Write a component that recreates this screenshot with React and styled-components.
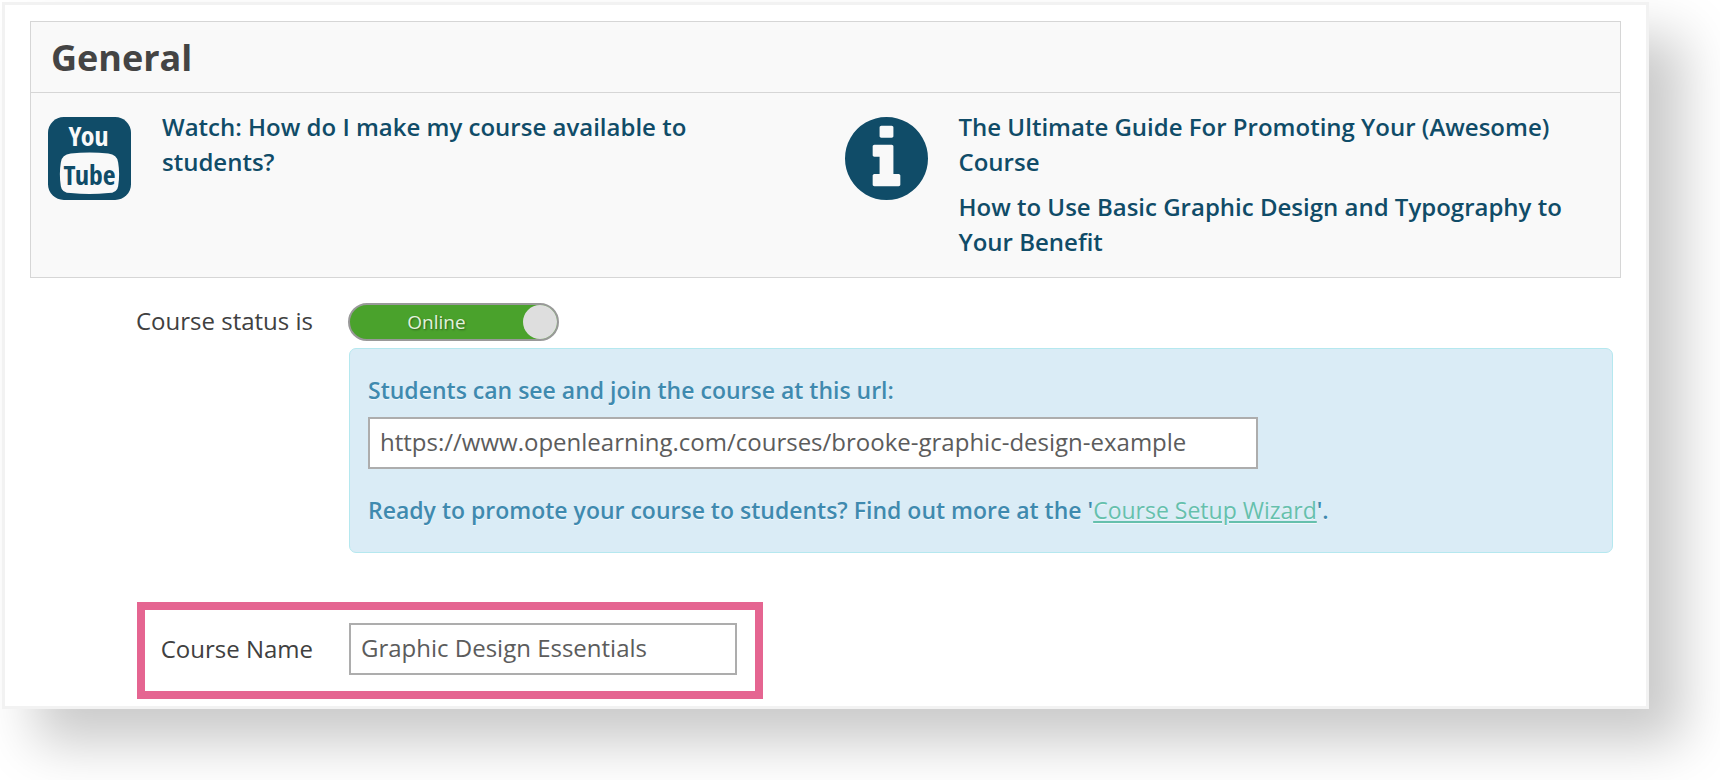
import React, { useState } from 'react';
import styled, { createGlobalStyle } from 'styled-components';

const GlobalStyle = createGlobalStyle`
  * {
    box-sizing: border-box;
  }

  body {
    margin: 0;
    background-color: #fff;
    color: #444;
    font-family: 'Open Sans', sans-serif;
    font-size: 24px;
    line-height: 35px;
  }
`;

const Card = styled.main`
  margin: 2px 71px 71px 2px;
  padding: 16px 25px 7px;
  border: 3px solid #f2f2f2;
  background-color: #fff;
  box-shadow: 34px 34px 50px rgba(0, 0, 0, 0.21);
`;

const Panel = styled.section`
  border: 1px solid #d6d6d6;
  background-color: #f9f9f9;
`;

const PanelTitle = styled.h1`
  margin: 0;
  padding: 11px 20px 9px;
  border-bottom: 1px solid #d6d6d6;
  font-size: 36px;
  font-weight: 700;
  line-height: 50px;
`;

const HelpGrid = styled.div`
  display: grid;
  grid-template-columns: 1fr 1fr;
  column-gap: 4px;
  padding: 16px 0 18px;
`;

const HelpItem = styled.div`
  display: flex;
  align-items: flex-start;
  gap: 31px;
  padding: 0 30px 0 17px;

  svg {
    flex: none;
    width: 83px;
    height: 83px;
    margin-top: 8px;
    fill: #104c68;
  }
`;

const HelpLinks = styled.div`
  display: flex;
  flex-direction: column;
  gap: 10px;

  a {
    color: #104c68;
    font-weight: 600;
    text-decoration: none;
  }
`;

const Row = styled.div`
  display: grid;
  grid-template-columns: 180px 1fr;
  column-gap: 35px;
  margin-top: 25px;
  padding: 0 8px 0 103px;
`;

const FieldLabel = styled.label`
  color: #404040;
  line-height: 36px;
  text-align: right;
`;

const Switch = styled.label`
  position: relative;
  display: flex;
  flex-direction: ${props => (props.$on ? 'row' : 'row-reverse')};
  align-items: center;
  width: 211px;
  height: 38px;
  border: 2px solid #999;
  border-radius: 19px;
  background-color: ${props => (props.$on ? '#4aa22c' : '#999')};
  cursor: pointer;

  input {
    position: absolute;
    inset: 0;
    width: 100%;
    height: 100%;
    margin: 0;
    opacity: 0;
  }
`;

const SwitchText = styled.span`
  flex: 1;
  color: #e3f2de;
  font-size: 19px;
  text-align: center;
  text-shadow: 1px 1px 2px rgba(0, 0, 0, 0.4);
`;

const Knob = styled.span`
  width: 34px;
  height: 34px;
  border-radius: 50%;
  background-color: #dedede;
`;

const Alert = styled.div`
  margin: 7px 0 0 1px;
  padding: 24px 18px;
  border: 1px solid #b5e8ef;
  border-radius: 7px;
  background-color: #daecf6;
  color: #3f8aaf;
  font-size: 23px;
  font-weight: 600;
  text-shadow: 0 1px 0 rgba(255, 255, 255, 0.6);

  p {
    margin: 0;
  }

  a {
    color: #65c0ad;
    font-weight: 500;
  }
`;

const TextInput = styled.input`
  display: block;
  width: 100%;
  max-width: ${props => props.$width};
  height: 52px;
  padding: 0 10px 3px;
  border: 2px solid #adadad;
  background-color: #fff;
  color: #5c5c5c;
  font-family: inherit;
  font-size: 24px;
`;

const UrlInput = styled(TextInput)`
  margin: 9px 0 24px;
`;

const Highlight = styled.div`
  display: grid;
  grid-template-columns: 168px 1fr;
  column-gap: 36px;
  align-items: center;
  max-width: 626px;
  margin: 49px 0 0 107px;
  padding: 13px 18px 16px 0;
  border: 8px solid #e56591;
`;

const Logo = styled.svg`
  text {
    font-family: 'Noto Sans ExtraCondensed', 'Open Sans Condensed', 'Liberation Sans Narrow', sans-serif;
    font-size: 28px;
    font-weight: 600;
    text-anchor: middle;
  }
`;

const YouTubeIcon = () => (
  <Logo viewBox="0 0 84 84" aria-hidden="true">
    <rect width="84" height="84" rx="16" />
    <path
      fill="#f9f9f9"
      d="M23 37Q42 35 61 37Q70 38 71 46Q73 58 71 70Q70 77 61 77Q42 79 23 77Q14 77 13 70Q11 58 13 46Q14 38 23 37Z"
    />
    <text x="41" y="29" fill="#f9f9f9">You</text>
    <text x="42" y="69">Tube</text>
  </Logo>
);

const InfoIcon = () => (
  <svg viewBox="0 0 1536 1536" aria-hidden="true">
    <path d="M1024 1248v-160q0-14-9-23t-23-9h-96v-512q0-14-9-23t-23-9h-320q-14 0-23 9t-9 23v160q0 14 9 23t23 9h96v320h-96q-14 0-23 9t-9 23v160q0 14 9 23t23 9h448q14 0 23-9t9-23zm-128-896v-160q0-14-9-23t-23-9h-192q-14 0-23 9t-9 23v160q0 14 9 23t23 9h192q14 0 23-9t9-23zm640 416q0 209-103 385.5t-279.5 279.5-385.5 103-385.5-103-279.5-279.5-103-385.5 103-385.5 279.5-279.5 385.5-103 385.5 103 279.5 279.5 103 385.5z" />
  </svg>
);

const App = () => {
  const [online, setOnline] = useState(true);
  const [name, setName] = useState('Graphic Design Essentials');

  return (
    <>
      <GlobalStyle />
      <Card>
        <Panel>
          <PanelTitle>General</PanelTitle>
          <HelpGrid>
            <HelpItem>
              <YouTubeIcon />
              <HelpLinks>
                <a href="#">Watch: How do I make my course available to students?</a>
              </HelpLinks>
            </HelpItem>
            <HelpItem>
              <InfoIcon />
              <HelpLinks>
                <a href="#">The Ultimate Guide For Promoting Your (Awesome) Course</a>
                <a href="#">How to Use Basic Graphic Design and Typography to Your Benefit</a>
              </HelpLinks>
            </HelpItem>
          </HelpGrid>
        </Panel>

        <Row>
          <FieldLabel htmlFor="status">Course status is</FieldLabel>
          <div>
            <Switch $on={online}>
              <input
                id="status"
                type="checkbox"
                checked={online}
                onChange={e => setOnline(e.target.checked)}
              />
              <SwitchText>{online ? 'Online' : 'Offline'}</SwitchText>
              <Knob />
            </Switch>
            <Alert>
              <label htmlFor="url">Students can see and join the course at this url:</label>
              <UrlInput
                id="url"
                type="text"
                readOnly
                $width="890px"
                value="https://www.openlearning.com/courses/brooke-graphic-design-example"
              />
              <p>
                Ready to promote your course to students? Find out more at the '<a href="#">Course Setup Wizard</a>'.
              </p>
            </Alert>
          </div>
        </Row>

        <Highlight>
          <FieldLabel htmlFor="name">Course Name</FieldLabel>
          <TextInput
            id="name"
            type="text"
            $width="388px"
            value={name}
            onChange={e => setName(e.target.value)}
          />
        </Highlight>
      </Card>
    </>
  );
};

export default App;
